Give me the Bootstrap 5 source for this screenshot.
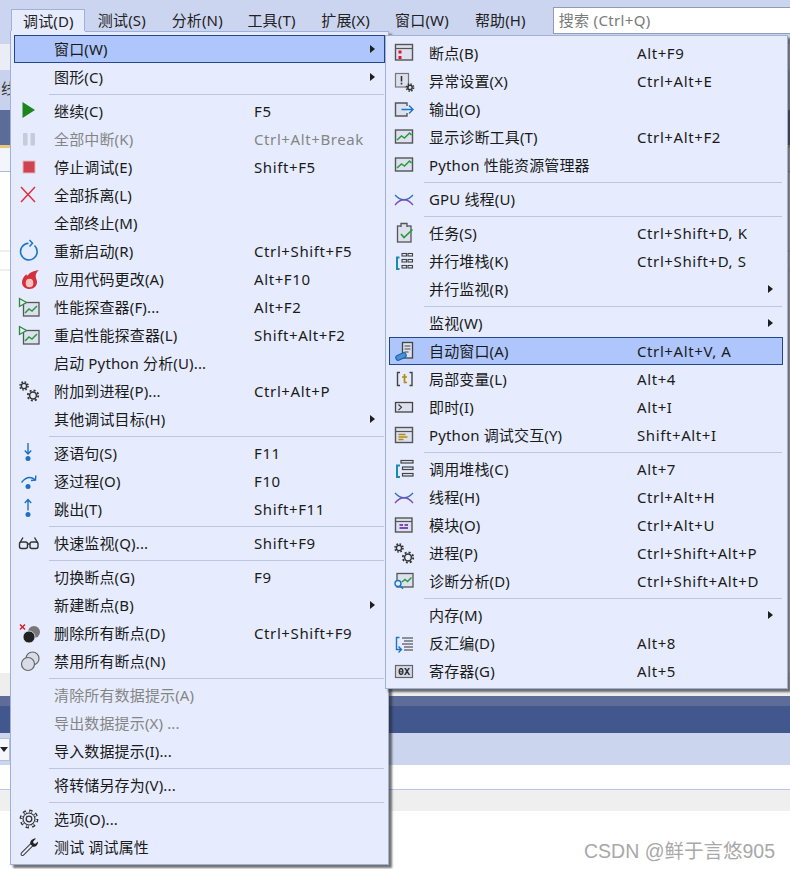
<!DOCTYPE html>
<html lang="zh">
<head>
<meta charset="utf-8">
<title>调试菜单</title>
<link href="https://cdn.jsdelivr.net/npm/bootstrap@5.3.0/dist/css/bootstrap.min.css" rel="stylesheet">
<style>
html,body{margin:0;height:869px;overflow:hidden;background:#fff}
body{font-family:"Noto Sans","Noto Sans CJK SC",sans-serif;font-size:15px;color:#1a1a1a;position:relative;line-height:28px}
.vs-top{height:34px;background:#ccd5f0}
.vs-tab{height:23px;line-height:22px;padding-left:12px;margin-top:9px;white-space:nowrap;color:#222;letter-spacing:.15px}
.vs-tab:nth-child(1){width:74px;margin-left:11px;background:#e6ecfd;border:1px solid #9fb1d9;border-bottom:0;padding-left:11px;height:23px}
.vs-tab:nth-child(2){width:74px;margin-left:1px}
.vs-tab:nth-child(3){width:76px}
.vs-tab:nth-child(4){width:74px}
.vs-tab:nth-child(5){width:74px}
.vs-tab:nth-child(6){width:80px}
.vs-tab:nth-child(7){width:90px}
.vs-search{width:238px;height:27px;margin-top:7px;background:#fff;border:1px solid #8f9cb8;border-right:0;padding-left:5px;line-height:25px;color:#7a7a7a;letter-spacing:.35px}
.b1{height:10px;background:#ccd5f0}
.b2{height:26px;background:#eaedf5}
.b3{height:40px;background:#c8d2ee;color:#333;line-height:36px;white-space:nowrap;overflow:hidden;text-indent:1px}
.b4{height:35px;background:#5b6b9a}
.b5{height:3px;background:#e8c87a}
.b6{height:24px;background:#f3f5fe;border-bottom:1px solid #a9b7d8}
.b7{height:78px;background:#fff}
.b8{height:2px;background:#eee}
.b9{height:17px;background:#fff}
.b10{height:402px;background:#fff}
.b11{height:23px;background:#eee}
.b12{height:10px;background:#5d6c98}
.b13{height:27px;background:#41578e}
.b14{height:32px;background:#cbd5ee;padding-top:5px}
.vs-combo{width:10px;height:23px;background:#f5f7fd;border:1px solid #b4bfd8;border-left:0;position:relative}
.vs-combo::after{content:"";position:absolute;left:0;top:8px;border:4px solid transparent;border-top:5px solid #222;border-bottom:0}
.b15{height:24px;background:#fff}
.b16{height:22px;background:#efefef;border-top:1px solid #b8c8ec}
.b17{height:59px;background:#fff;padding-right:15px;padding-top:25px}
.vs-mark{font-family:"Liberation Sans","Noto Sans CJK SC",sans-serif;font-size:19.500px;line-height:30px;color:#a8a8a8}
.vs-menu{position:absolute;background:#e6ecfd;border:1px solid #9fb1d9;padding:3px;box-shadow:3px 3px 2px rgba(40,40,40,.65)}
.vs-main{left:10px;top:31px;width:379px;height:834px}
.vs-main::before{content:"";position:absolute;left:0;top:-1px;width:74px;height:2px;background:#e6ecfd}
.vs-sub{left:385px;top:35px;width:403px;height:654px;z-index:2;padding-right:4px}
.vs-row{height:28px;display:flex;white-space:nowrap}
.vs-row svg{width:40px;height:28px;flex:none;display:block}
.vs-lab{letter-spacing:.15px}
.vs-main .vs-lab{width:200px;flex:none}
.vs-sub .vs-lab{width:208px;flex:none}
.vs-key{flex:1 1 auto;letter-spacing:.6px}
.vs-on{background:#aec6fb;box-shadow:inset 0 0 0 1px #23468a}
.vs-off{color:#858585}
.vs-sep{height:6px;padding-left:35px;display:flex;align-items:center}
.vs-sep::after{content:"";height:1px;flex:1;background:#bcc5e2;margin-right:1px}
.vs-has::after{content:"";width:0;height:0;margin:10px 10px 0 0;border-left:5px solid #1e1e1e;border-top:4px solid transparent;border-bottom:4px solid transparent;flex:none}
.vs-hx{font:700 10px "Liberation Mono",monospace}
</style>
</head>
<body>
<svg width="0" height="0" class="d-block position-absolute">
<defs>
<symbol id="ic-perf" viewBox="0 0 40 28"><rect x="9.500" y="9.500" width="15.500" height="13.500" fill="#dde0ee" stroke="#555" stroke-width="1.300"/><path d="M11 20l4-4 3 2 5-5" fill="none" stroke="#2a9a3a" stroke-width="1.500"/><path d="M5.500 5.500v8l7-4z" fill="#e6ecfd" stroke="#2a8a3a" stroke-width="1.300"/></symbol>
<symbol id="ic-gears" viewBox="0 0 40 28"><g fill="none" stroke="#333"><circle cx="10" cy="9" r="2.600" stroke-width="1.400"/><circle cx="10" cy="9" r="4" stroke-width="1.600" stroke-dasharray="1.600 1.550"/><circle cx="19" cy="18.500" r="3.400" stroke-width="1.500"/><circle cx="19" cy="18.500" r="5.200" stroke-width="1.800" stroke-dasharray="2 2.080"/></g></symbol>
<symbol id="ic-chart" viewBox="0 0 40 28"><rect x="6.500" y="7" width="17" height="13" fill="#dde0ee" stroke="#555" stroke-width="1.400"/><path d="M8 17l4.500-4 3 2 5-5 2 2" fill="none" stroke="#2a9a3a" stroke-width="1.500"/></symbol>
<symbol id="ic-thread" viewBox="0 0 40 28"><path d="M6 10Q15 19.500 24 10" fill="none" stroke="#2a6fc9" stroke-width="1.300"/><path d="M6 20Q15 9.500 24 20" fill="none" stroke="#7a4bb8" stroke-width="1.300"/></symbol>
</defs>
</svg>

<div class="d-flex vs-top">
  <div class="vs-tab">调试(D)</div><div class="vs-tab">测试(S)</div><div class="vs-tab">分析(N)</div><div class="vs-tab">工具(T)</div><div class="vs-tab">扩展(X)</div><div class="vs-tab">窗口(W)</div><div class="vs-tab">帮助(H)</div>
  <div class="vs-search">搜索 (Ctrl+Q)</div>
</div>
<div class="b1"></div><div class="b2"></div><div class="b3">线</div><div class="b4"></div><div class="b5"></div><div class="b6"></div>
<div class="b7"></div><div class="b8"></div><div class="b9"></div><div class="b8"></div><div class="b10"></div>
<div class="b11"></div><div class="b12"></div><div class="b13"></div>
<div class="b14"><div class="vs-combo"></div></div>
<div class="b15"></div><div class="b16"></div>
<div class="b17 d-flex justify-content-end"><span class="vs-mark">CSDN @鲜于言悠905</span></div>

<div class="vs-menu vs-main">
  <div class="vs-row vs-on vs-has"><svg viewBox="0 0 40 28"></svg><span class="vs-lab">窗口(W)</span><span class="vs-key"></span></div>
  <div class="vs-row vs-has"><svg viewBox="0 0 40 28"></svg><span class="vs-lab">图形(C)</span><span class="vs-key"></span></div>
  <div class="vs-sep"></div>
  <div class="vs-row"><svg viewBox="0 0 40 28"><path d="M8.500 5L21 13 8.500 21z" fill="#1c851c"/></svg><span class="vs-lab">继续(C)</span><span class="vs-key">F5</span></div>
  <div class="vs-row vs-off"><svg viewBox="0 0 40 28"><rect x="9" y="8" width="4.500" height="12.500" rx="1" fill="#c6cada"/><rect x="16.500" y="8" width="4.500" height="12.500" rx="1" fill="#c6cada"/></svg><span class="vs-lab">全部中断(K)</span><span class="vs-key">Ctrl+Alt+Break</span></div>
  <div class="vs-row"><svg viewBox="0 0 40 28"><rect x="9" y="8" width="12" height="12" fill="#cd4352" stroke="#eab4bc"/></svg><span class="vs-lab">停止调试(E)</span><span class="vs-key">Shift+F5</span></div>
  <div class="vs-row"><svg viewBox="0 0 40 28"><path d="M7 6l14 15M21 6L7 21" stroke="#e0303f" stroke-width="1.500" fill="none"/></svg><span class="vs-lab">全部拆离(L)</span><span class="vs-key"></span></div>
  <div class="vs-row"><svg viewBox="0 0 40 28"></svg><span class="vs-lab">全部终止(M)</span><span class="vs-key"></span></div>
  <div class="vs-row"><svg viewBox="0 0 40 28"><path d="M20.500 8.500A8.300 8.300 0 1 1 14.500 6.300" fill="none" stroke="#1b74c9" stroke-width="1.600"/><path d="M15.500 3L18.500 6.200 15.500 9.500" fill="none" stroke="#1b74c9" stroke-width="1.500"/></svg><span class="vs-lab">重新启动(R)</span><span class="vs-key">Ctrl+Shift+F5</span></div>
  <div class="vs-row"><svg viewBox="0 0 40 28"><path d="M25 5C20 6 16 7 14 10 13 11 12.500 11 12.500 9 9 12 8 15 8 17.500 8 21.500 11.500 24 15.500 24 20 24 23 21 23 17 23 14 21 13 22 9 22.500 7.500 24 6 25 5z" fill="#d32f3c"/><ellipse cx="15.500" cy="18" rx="3.800" ry="4.300" fill="#f6c4bd"/></svg><span class="vs-lab">应用代码更改(A)</span><span class="vs-key">Alt+F10</span></div>
  <div class="vs-row"><svg viewBox="0 0 40 28"><use href="#ic-perf"/></svg><span class="vs-lab">性能探查器(F)...</span><span class="vs-key">Alt+F2</span></div>
  <div class="vs-row"><svg viewBox="0 0 40 28"><use href="#ic-perf"/></svg><span class="vs-lab">重启性能探查器(L)</span><span class="vs-key">Shift+Alt+F2</span></div>
  <div class="vs-row"><svg viewBox="0 0 40 28"></svg><span class="vs-lab">启动 Python 分析(U)...</span><span class="vs-key"></span></div>
  <div class="vs-row"><svg viewBox="0 0 40 28"><use href="#ic-gears"/></svg><span class="vs-lab">附加到进程(P)...</span><span class="vs-key">Ctrl+Alt+P</span></div>
  <div class="vs-row vs-has"><svg viewBox="0 0 40 28"></svg><span class="vs-lab">其他调试目标(H)</span><span class="vs-key"></span></div>
  <div class="vs-sep"></div>
  <div class="vs-row"><svg viewBox="0 0 40 28"><path d="M14 4v11M10.800 11.500L14 15l3.200-3.500" fill="none" stroke="#1b6fc4" stroke-width="1.400"/><circle cx="14" cy="19.500" r="2.500" fill="#1b6fc4"/></svg><span class="vs-lab">逐语句(S)</span><span class="vs-key">F11</span></div>
  <div class="vs-row"><svg viewBox="0 0 40 28"><path d="M7.500 15.500Q14 7.500 21 12.500M21.800 8.500L21.500 13 17 13.500" fill="none" stroke="#1b6fc4" stroke-width="1.400"/><circle cx="14" cy="19.500" r="2.500" fill="#1b6fc4"/></svg><span class="vs-lab">逐过程(O)</span><span class="vs-key">F10</span></div>
  <div class="vs-row"><svg viewBox="0 0 40 28"><path d="M14 15.500V4.500M10.800 8L14 4.500 17.200 8" fill="none" stroke="#1b6fc4" stroke-width="1.400"/><circle cx="14" cy="19.500" r="2.500" fill="#1b6fc4"/></svg><span class="vs-lab">跳出(T)</span><span class="vs-key">Shift+F11</span></div>
  <div class="vs-sep"></div>
  <div class="vs-row"><svg viewBox="0 0 40 28"><g fill="none" stroke="#333" stroke-width="1.400"><rect x="5.500" y="13" width="8" height="6.500" rx="2"/><rect x="16" y="13" width="8" height="6.500" rx="2"/><path d="M13.500 15h2.500M6 13.500L9 8.500M23.500 13.500L20.500 8.500"/></g></svg><span class="vs-lab">快速监视(Q)...</span><span class="vs-key">Shift+F9</span></div>
  <div class="vs-sep"></div>
  <div class="vs-row"><svg viewBox="0 0 40 28"></svg><span class="vs-lab">切换断点(G)</span><span class="vs-key">F9</span></div>
  <div class="vs-row vs-has"><svg viewBox="0 0 40 28"></svg><span class="vs-lab">新建断点(B)</span><span class="vs-key"></span></div>
  <div class="vs-row"><svg viewBox="0 0 40 28"><circle cx="20" cy="13" r="6" fill="#777"/><circle cx="15" cy="18" r="6" fill="#222" stroke="#e6ecfd" stroke-width=".8"/><path d="M6 5.500l5 5M11 5.500l-5 5" stroke="#d91f2e" stroke-width="1.500"/></svg><span class="vs-lab">删除所有断点(D)</span><span class="vs-key">Ctrl+Shift+F9</span></div>
  <div class="vs-row"><svg viewBox="0 0 40 28"><circle cx="18.500" cy="11.500" r="6.500" fill="#d8dbe8" stroke="#666" stroke-width="1.200"/><circle cx="14" cy="17" r="6.500" fill="#d8dbe8" stroke="#666" stroke-width="1.200"/></svg><span class="vs-lab">禁用所有断点(N)</span><span class="vs-key"></span></div>
  <div class="vs-sep"></div>
  <div class="vs-row vs-off"><svg viewBox="0 0 40 28"></svg><span class="vs-lab">清除所有数据提示(A)</span><span class="vs-key"></span></div>
  <div class="vs-row vs-off"><svg viewBox="0 0 40 28"></svg><span class="vs-lab">导出数据提示(X) ...</span><span class="vs-key"></span></div>
  <div class="vs-row"><svg viewBox="0 0 40 28"></svg><span class="vs-lab">导入数据提示(I)...</span><span class="vs-key"></span></div>
  <div class="vs-sep"></div>
  <div class="vs-row"><svg viewBox="0 0 40 28"></svg><span class="vs-lab">将转储另存为(V)...</span><span class="vs-key"></span></div>
  <div class="vs-sep"></div>
  <div class="vs-row"><svg viewBox="0 0 40 28"><circle cx="15" cy="14" r="6.500" fill="#333"/><circle cx="15" cy="14" r="8" fill="none" stroke="#333" stroke-width="2.800" stroke-dasharray="3.140 3.140"/><circle cx="15" cy="14" r="5.400" fill="#e6ecfd"/><circle cx="15" cy="14" r="7.300" fill="none" stroke="#e6ecfd" stroke-width="1.500" stroke-dasharray="1.700 4.030" stroke-dashoffset="-.7"/><circle cx="15" cy="14" r="2.800" fill="none" stroke="#333" stroke-width="1.300"/></svg><span class="vs-lab">选项(O)...</span><span class="vs-key"></span></div>
  <div class="vs-row"><svg viewBox="0 0 40 28"><path d="M8.500 21L18 11.500" stroke="#444" stroke-width="4" stroke-linecap="round"/><path d="M8.500 21L18 11.500" stroke="#e6ecfd" stroke-width="1.800" stroke-linecap="round"/><path d="M24 8.500c.3 3-2 5.500-5 5.300l-2.800-2.800c-.2-3.300 2.500-5.800 5.800-5.400l-2.800 2.800.2 2.100 2.100.2z" fill="#222"/></svg><span class="vs-lab">测试 调试属性</span><span class="vs-key"></span></div>
</div>

<div class="vs-menu vs-sub">
  <div class="vs-row"><svg viewBox="0 0 40 28"><rect x="6.500" y="5.500" width="17" height="15.500" fill="#dde0ee" stroke="#555" stroke-width="1.400"/><path d="M6.500 9.500h17" stroke="#555" stroke-width="1.200"/><rect x="9.500" y="11.500" width="3" height="3" fill="#e0142a"/><rect x="9.500" y="17" width="3" height="3" fill="#e0142a"/></svg><span class="vs-lab">断点(B)</span><span class="vs-key">Alt+F9</span></div>
  <div class="vs-row"><svg viewBox="0 0 40 28"><rect x="6.500" y="6.500" width="13" height="13.500" fill="#dde0ee" stroke="#777" stroke-width="1.200"/><path d="M12.500 9v5.500M12.500 15.800v1.700" stroke="#333" stroke-width="1.600"/><circle cx="21" cy="20.500" r="2.200" fill="none" stroke="#333" stroke-width="1.500"/><circle cx="21" cy="20.500" r="3.600" fill="none" stroke="#333" stroke-width="1.600" stroke-dasharray="1.400 1.430"/></svg><span class="vs-lab">异常设置(X)</span><span class="vs-key">Ctrl+Alt+E</span></div>
  <div class="vs-row"><svg viewBox="0 0 40 28"><path d="M18 11V8H6.500v13H18v-3" fill="#dde0ee" stroke="#555" stroke-width="1.400"/><path d="M12.500 14.500H24M20 10.500l4 4-4 4" fill="none" stroke="#1b74c9" stroke-width="1.400"/></svg><span class="vs-lab">输出(O)</span><span class="vs-key"></span></div>
  <div class="vs-row"><svg viewBox="0 0 40 28"><use href="#ic-chart"/></svg><span class="vs-lab">显示诊断工具(T)</span><span class="vs-key">Ctrl+Alt+F2</span></div>
  <div class="vs-row"><svg viewBox="0 0 40 28"><use href="#ic-chart"/></svg><span class="vs-lab">Python 性能资源管理器</span><span class="vs-key"></span></div>
  <div class="vs-sep"></div>
  <div class="vs-row"><svg viewBox="0 0 40 28"><use href="#ic-thread"/></svg><span class="vs-lab">GPU 线程(U)</span><span class="vs-key"></span></div>
  <div class="vs-sep"></div>
  <div class="vs-row"><svg viewBox="0 0 40 28"><rect x="8.500" y="7" width="13.500" height="16" fill="#dde0ee" stroke="#555" stroke-width="1.300"/><path d="M12 8V4.500h6V8" fill="#dde0ee" stroke="#555" stroke-width="1.300"/><path d="M12 15l3 3.500 8.500-8" fill="none" stroke="#2a9a3a" stroke-width="1.700"/></svg><span class="vs-lab">任务(S)</span><span class="vs-key">Ctrl+Shift+D, K</span></div>
  <div class="vs-row"><svg viewBox="0 0 40 28"><g fill="none" stroke="#444" stroke-width="1.100"><rect x="13" y="6.500" width="4.500" height="2.500"/><rect x="19" y="6.500" width="4.500" height="2.500"/><rect x="13" y="12.500" width="4.500" height="2.500"/><rect x="19" y="12.500" width="4.500" height="2.500"/><rect x="13" y="18.500" width="4.500" height="2.500"/><rect x="19" y="18.500" width="4.500" height="2.500"/></g><path d="M10.500 10.500H8v11.500h2.500" fill="none" stroke="#1a8bb0" stroke-width="2"/></svg><span class="vs-lab">并行堆栈(K)</span><span class="vs-key">Ctrl+Shift+D, S</span></div>
  <div class="vs-row vs-has"><svg viewBox="0 0 40 28"></svg><span class="vs-lab">并行监视(R)</span><span class="vs-key"></span></div>
  <div class="vs-sep"></div>
  <div class="vs-row vs-has"><svg viewBox="0 0 40 28"></svg><span class="vs-lab">监视(W)</span><span class="vs-key"></span></div>
  <div class="vs-row vs-on"><svg viewBox="0 0 40 28"><rect x="13.500" y="5.500" width="10" height="15.500" fill="#dde0ee" stroke="#444" stroke-width="1.300"/><path d="M15.500 9h6M15.500 12h6M15.500 15h4" stroke="#444"/><rect x="6.500" y="17" width="11" height="5" rx="2.500" fill="#4a90d9" stroke="#1b5fa8" transform="rotate(-25 12 19.500)"/></svg><span class="vs-lab">自动窗口(A)</span><span class="vs-key">Ctrl+Alt+V, A</span></div>
  <div class="vs-row"><svg viewBox="0 0 40 28"><path d="M11 7.500H8.500v13H11M20.500 7.500H23v13h-2.500" fill="none" stroke="#444" stroke-width="1.400"/><path d="M15.500 9v8.500h2.500M13 12h5" fill="none" stroke="#b58a10" stroke-width="1.700"/></svg><span class="vs-lab">局部变量(L)</span><span class="vs-key">Alt+4</span></div>
  <div class="vs-row"><svg viewBox="0 0 40 28"><rect x="6.500" y="9.500" width="17" height="9.500" fill="#dde0ee" stroke="#444" stroke-width="1.300"/><path d="M9.500 11.500l3 2.800-3 2.800" fill="none" stroke="#333" stroke-width="1.100"/></svg><span class="vs-lab">即时(I)</span><span class="vs-key">Alt+I</span></div>
  <div class="vs-row"><svg viewBox="0 0 40 28"><rect x="6.500" y="6.500" width="17" height="15" fill="#dde0ee" stroke="#555" stroke-width="1.400"/><path d="M6.500 10.500h17" stroke="#555" stroke-width="1.200"/><path d="M9.500 13.500h7M9.500 16h9M9.500 18.500h5" stroke="#b58a10" stroke-width="1.300"/></svg><span class="vs-lab">Python 调试交互(Y)</span><span class="vs-key">Shift+Alt+I</span></div>
  <div class="vs-sep"></div>
  <div class="vs-row"><svg viewBox="0 0 40 28"><g fill="none" stroke="#444" stroke-width="1.200"><rect x="12" y="5.500" width="12" height="2.500"/><rect x="13.500" y="12" width="10.500" height="2.500"/><rect x="13.500" y="18.500" width="10.500" height="2.500"/></g><path d="M11 10.500H8v11.500h3" fill="none" stroke="#1a8bb0" stroke-width="2"/></svg><span class="vs-lab">调用堆栈(C)</span><span class="vs-key">Alt+7</span></div>
  <div class="vs-row"><svg viewBox="0 0 40 28"><use href="#ic-thread"/></svg><span class="vs-lab">线程(H)</span><span class="vs-key">Ctrl+Alt+H</span></div>
  <div class="vs-row"><svg viewBox="0 0 40 28"><rect x="6.500" y="7" width="16.500" height="14" fill="#dde0ee" stroke="#555" stroke-width="1.400"/><path d="M6.500 10.500h16.500" stroke="#555" stroke-width="1.200"/><path d="M10.500 14h3.500M15.500 14h3.500M10.500 17h8.500" stroke="#7a4bb8" stroke-width="1.800"/></svg><span class="vs-lab">模块(O)</span><span class="vs-key">Ctrl+Alt+U</span></div>
  <div class="vs-row"><svg viewBox="0 0 40 28"><use href="#ic-gears"/></svg><span class="vs-lab">进程(P)</span><span class="vs-key">Ctrl+Shift+Alt+P</span></div>
  <div class="vs-row"><svg viewBox="0 0 40 28"><rect x="8" y="6.500" width="16" height="13.500" fill="#dde0ee" stroke="#555" stroke-width="1.300"/><path d="M13 15l3-2.500 2.500 2 4-4" fill="none" stroke="#2a9a3a" stroke-width="1.500"/><circle cx="9" cy="16.500" r="3" fill="#e6ecfd" stroke="#1b74c9" stroke-width="1.400"/><path d="M11 18.800l3 3" stroke="#1b74c9" stroke-width="1.600"/></svg><span class="vs-lab">诊断分析(D)</span><span class="vs-key">Ctrl+Shift+Alt+D</span></div>
  <div class="vs-sep"></div>
  <div class="vs-row vs-has"><svg viewBox="0 0 40 28"></svg><span class="vs-lab">内存(M)</span><span class="vs-key"></span></div>
  <div class="vs-row"><svg viewBox="0 0 40 28"><path d="M10.500 8.500H7.500v12H12M9.500 17.500l3 3-3 3" fill="none" stroke="#1b74c9" stroke-width="1.400"/><path d="M13 9h11M15 12h9M13 15h11M15 18h9M15 21h9" stroke="#333" stroke-width="1.200"/></svg><span class="vs-lab">反汇编(D)</span><span class="vs-key">Alt+8</span></div>
  <div class="vs-row"><svg viewBox="0 0 40 28"><rect x="6.500" y="8.500" width="17" height="12" fill="#d4d8e8" stroke="#666" stroke-width="1.200"/><text x="15" y="18" text-anchor="middle" class="vs-hx" fill="#222">0X</text></svg><span class="vs-lab">寄存器(G)</span><span class="vs-key">Alt+5</span></div>
</div>
<script src="https://cdn.jsdelivr.net/npm/bootstrap@5.3.0/dist/js/bootstrap.bundle.min.js"></script>
</body>
</html>
